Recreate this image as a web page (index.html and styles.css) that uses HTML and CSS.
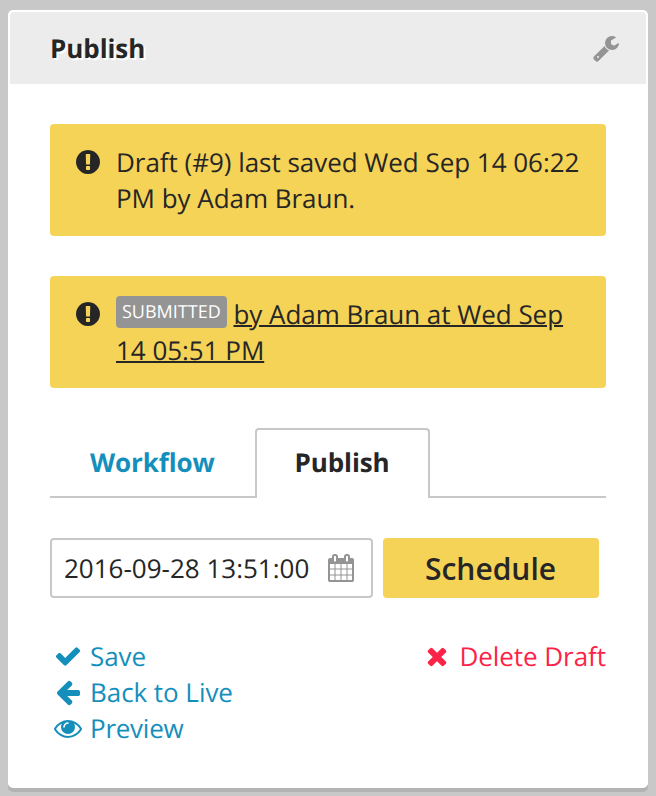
FILE: index.html
```html
<!DOCTYPE html>
<html lang="en">
<head>
<meta charset="utf-8">
<title>Publish</title>
<link rel="stylesheet" href="styles.css">
</head>
<body>
<section class="panel">
  <header class="panel-header">
    <h2 class="panel-title">Publish</h2>
    <svg class="icon icon-muted" viewBox="0 0 1792 1792"><path d="M448 1472q0-26-19-45t-45-19-45 19-19 45 19 45 45 19 45-19 19-45zm644-420l-682 682q-37 37-90 37-52 0-91-37l-106-108q-38-36-38-90 0-53 38-91l681-681q39 98 114.5 173.5t173.5 114.5zm634-435q0 39-23 106-47 134-164.5 217.5t-258.5 83.5q-185 0-316.5-131.5t-131.5-316.5 131.5-316.5 316.5-131.5q58 0 121.5 16.5t107.5 46.5q16 11 16 28t-16 28l-293 169v224l193 107q5-3 79-48.5t135.5-81 70.5-35.5q15 0 23.5 10t8.5 25z"/></svg>
  </header>
  <div class="panel-body">
    <div class="notice">
      <svg class="icon" viewBox="0 0 1792 1792"><path d="M896 128q209 0 385.5 103t279.5 279.5 103 385.5-103 385.5-279.5 279.5-385.5 103-385.5-103-279.5-279.5-103-385.5 103-385.5 279.5-279.5 385.5-103zm128 1247v-190q0-14-9-23.5t-22-9.5h-192q-13 0-23 10t-10 23v190q0 13 10 23t23 10h192q13 0 22-9.5t9-23.5zm-2-344l18-621q0-12-10-18-10-8-24-8h-220q-14 0-24 8-10 6-10 18l17 621q0 10 10 17.5t24 7.5h185q14 0 23.5-7.5t10.5-17.5z"/></svg>
      <p class="notice-text">Draft (#9) last saved Wed Sep 14 06:22 PM by Adam Braun.</p>
    </div>
    <div class="notice">
      <svg class="icon" viewBox="0 0 1792 1792"><path d="M896 128q209 0 385.5 103t279.5 279.5 103 385.5-103 385.5-279.5 279.5-385.5 103-385.5-103-279.5-279.5-103-385.5 103-385.5 279.5-279.5 385.5-103zm128 1247v-190q0-14-9-23.5t-22-9.5h-192q-13 0-23 10t-10 23v190q0 13 10 23t23 10h192q13 0 22-9.5t9-23.5zm-2-344l18-621q0-12-10-18-10-8-24-8h-220q-14 0-24 8-10 6-10 18l17 621q0 10 10 17.5t24 7.5h185q14 0 23.5-7.5t10.5-17.5z"/></svg>
      <p class="notice-text"><span class="badge">SUBMITTED</span> <a class="notice-link">by Adam Braun at Wed Sep 14 05:51 PM</a></p>
    </div>
    <nav class="tabs">
      <a class="tab">Workflow</a>
      <a class="tab tab-active">Publish</a>
      <span class="tab-rest"></span>
    </nav>
    <div class="schedule">
      <div class="date-field">
        <span>2016-09-28 13:51:00</span>
        <svg class="icon icon-muted" viewBox="0 0 1792 1792"><path d="M192 1664h288v-288h-288v288zm352 0h320v-288h-320v288zm-352-352h288v-320h-288v320zm352 0h320v-320h-320v320zm-352-384h288v-288h-288v288zm736 736h320v-288h-320v288zm-384-736h320v-288h-320v288zm768 736h288v-288h-288v288zm-384-352h320v-320h-320v320zm-352-864v-288q0-13-9.5-22.5t-22.5-9.5h-64q-13 0-22.5 9.5t-9.5 22.5v288q0 13 9.5 22.5t22.5 9.5h64q13 0 22.5-9.5t9.5-22.5zm736 864h288v-320h-288v320zm-384-384h320v-288h-320v288zm384 0h288v-288h-288v288zm32-480v-288q0-13-9.5-22.5t-22.5-9.5h-64q-13 0-22.5 9.5t-9.5 22.5v288q0 13 9.5 22.5t22.5 9.5h64q13 0 22.5-9.5t9.5-22.5zm384-64v1280q0 52-38 90t-90 38h-1408q-52 0-90-38t-38-90v-1280q0-52 38-90t90-38h128v-96q0-66 47-113t113-47h64q66 0 113 47t47 113v96h384v-96q0-66 47-113t113-47h64q66 0 113 47t47 113v96h128q52 0 90 38t38 90z"/></svg>
      </div>
      <button class="button" type="button">Schedule</button>
    </div>
    <div class="actions">
      <div class="action-list">
        <a class="action"><svg class="icon" viewBox="0 0 1792 1792"><path d="M1671 566q0 40-28 68l-724 724-136 136q-28 28-68 28t-68-28l-136-136-362-362q-28-28-28-68t28-68l136-136q28-28 68-28t68 28l294 295 656-657q28-28 68-28t68 28l136 136q28 28 28 68z"/></svg>Save</a>
        <a class="action"><svg class="icon" viewBox="0 0 1792 1792"><path d="M1664 896v128q0 53-32.5 90.5t-84.5 37.5h-704l293 294q38 36 38 90t-38 90l-75 76q-37 37-90 37-52 0-91-37l-651-652q-37-37-37-90 0-52 37-91l651-650q38-38 91-38 52 0 90 38l75 74q38 38 38 91t-38 91l-293 293h704q52 0 84.5 37.5t32.5 90.5z"/></svg>Back to Live</a>
        <a class="action action-preview"><svg class="icon" viewBox="0 0 1792 1792"><path d="M1664 960q-152-236-381-353 61 104 61 225 0 185-131.5 316.5t-316.5 131.5-316.5-131.5-131.5-316.5q0-121 61-225-229 117-381 353 133 205 333.5 326.5t434.5 121.5 434.5-121.5 333.5-326.5zm-720-384q0-20-14-34t-34-14q-125 0-214.5 89.5t-89.5 214.5q0 20 14 34t34 14 34-14 14-34q0-86 61-147t147-61q20 0 34-14t14-34zm848 384q0 34-20 69-140 230-376.5 368.5t-499.5 138.5-499.5-139-376.5-368q-20-35-20-69t20-69q140-229 376.5-368t499.5-139 499.5 139 376.5 368q20 35 20 69z"/></svg>Preview</a>
      </div>
      <a class="action action-danger"><svg class="icon" viewBox="0 0 1792 1792"><path d="M1490 1322q0 40-28 68l-136 136q-28 28-68 28t-68-28l-294-294-294 294q-28 28-68 28t-68-28l-136-136q-28-28-28-68t28-68l294-294-294-294q-28-28-28-68t28-68l136-136q28-28 68-28t68 28l294 294 294-294q28-28 68-28t68 28l136 136q28 28 28 68t-28 68l-294 294 294 294q28 28 28 68z"/></svg>Delete Draft</a>
    </div>
  </div>
</section>
</body>
</html>
```
FILE: styles.css
```css
* { box-sizing: border-box; }

body {
  margin: 0;
  padding: 10px 8px 8px;
  height: 796px;
  background: #c8c8c8;
  color: #262626;
  font: 26px/36px "Open Sans", "Noto Sans", sans-serif;
  text-rendering: geometricPrecision;
}

.panel {
  height: 778px;
  border: 2px solid #fff;
  border-radius: 5px;
  background: #fff;
  box-shadow: 0 4px 0 #b3b3b3;
}

.panel-header {
  display: flex;
  justify-content: space-between;
  padding: 18px 26px 18px 40px;
  border-radius: 4px 4px 0 0;
  background: #ececec;
}

.panel-title {
  margin: 0;
  font-size: 26px;
  font-weight: 700;
  letter-spacing: -0.08px;
  text-shadow: 2px 2px 0 #fff;
}

.icon {
  flex: none;
  display: block;
  width: 28px;
  height: 28px;
  margin: 4px 0;
  fill: currentColor;
}

.icon-muted { color: #949494; }

.panel-body { padding: 40px; }

.notice {
  display: flex;
  gap: 14px;
  height: 112px;
  margin-bottom: 40px;
  padding: 20px 24px;
  border-radius: 4px;
  background: #f5d356;
}

.notice-text {
  margin: 0;
  letter-spacing: -0.03px;
}

.notice-link {
  text-decoration: underline;
  text-decoration-thickness: 2px;
}

.badge {
  display: inline-block;
  height: 32px;
  padding: 0 6px;
  border-radius: 4px;
  background: #949494;
  color: #fff;
  font-size: 18px;
  letter-spacing: 0;
  line-height: 32px;
  vertical-align: top;
}

.tabs {
  display: flex;
  height: 70px;
}

.tab {
  width: 205px;
  padding: 16px 0 16px 40px;
  border-bottom: 2px solid #c8c8c8;
  color: #148fbc;
  font-weight: 700;
  letter-spacing: -0.1px;
}

.tab-active {
  width: 175px;
  padding: 14px 0 14px 37.5px;
  border: 2px solid #c8c8c8;
  border-bottom: 0;
  border-radius: 4px 4px 0 0;
  color: #262626;
}

.tab-rest {
  flex: 1;
  border-bottom: 2px solid #c8c8c8;
}

.schedule {
  display: flex;
  gap: 10px;
  margin: 40px 0;
}

.date-field {
  display: flex;
  justify-content: space-between;
  width: 323px;
  height: 60px;
  padding: 10px 16.5px 10px 12px;
  border: 2px solid #c8c8c8;
  border-radius: 4px;
}

.button {
  width: 216px;
  height: 60px;
  padding: 2px 1px 0 0;
  border: 0;
  border-radius: 4px;
  background: #f5d356;
  color: #262626;
  font: 600 30px/58px "Open Sans", "Noto Sans", sans-serif;
}

.actions {
  display: flex;
  justify-content: space-between;
  align-items: flex-start;
  padding-left: 4px;
}

.action {
  display: flex;
  gap: 8px;
  color: #148fbc;
  letter-spacing: -0.05px;
}

.action-preview { letter-spacing: -0.25px; }

.action-danger { color: #fc2349; }
```
